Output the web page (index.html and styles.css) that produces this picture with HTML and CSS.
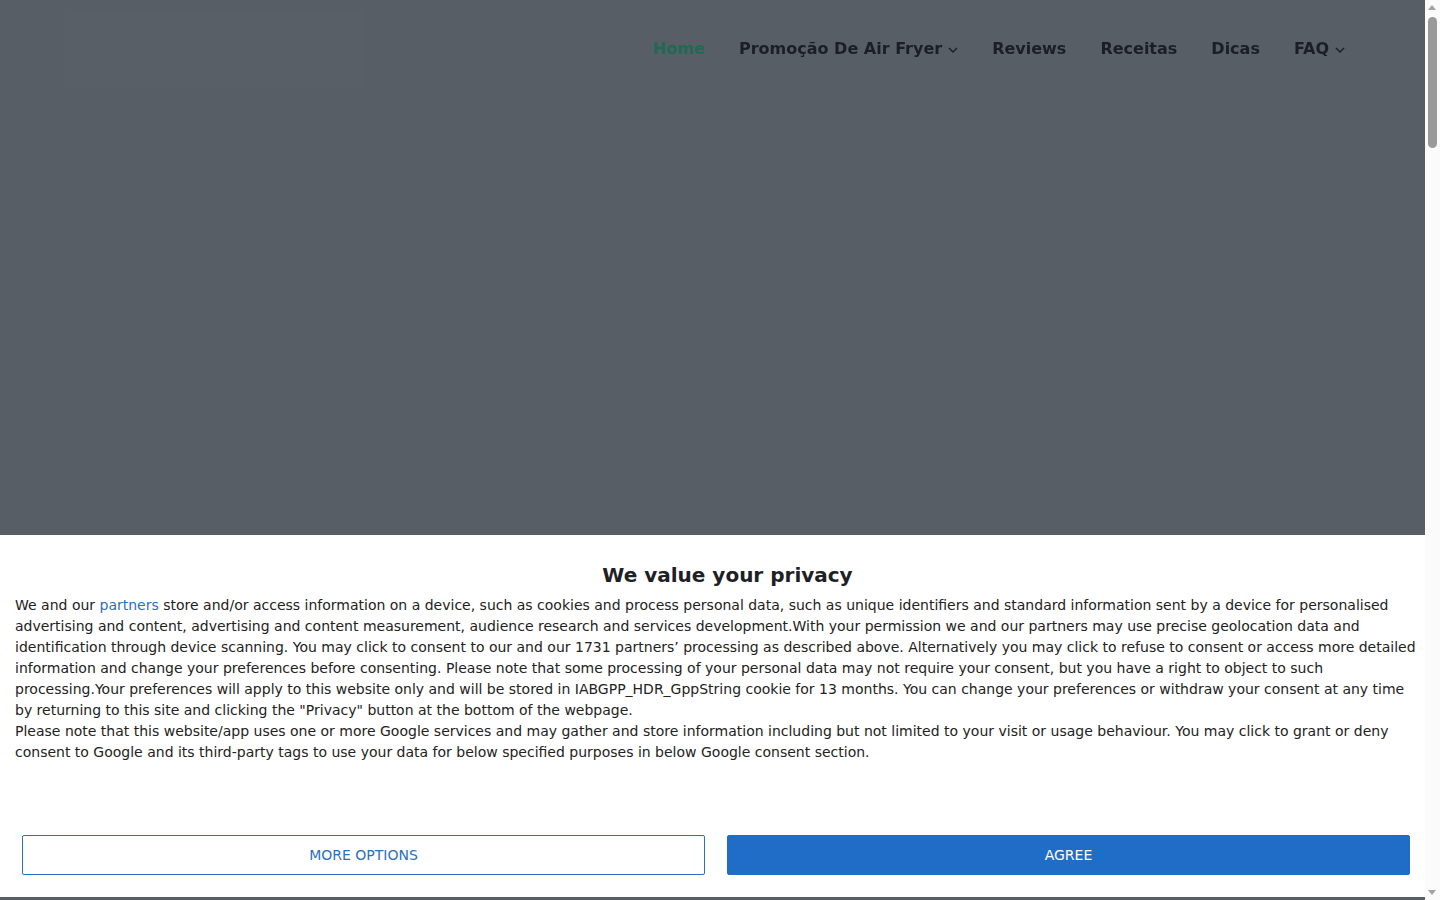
FILE: index.html
```html
<!DOCTYPE html>
<html lang="pt-BR">
  <head>
    <meta charset="UTF-8" />
    <meta name="viewport" content="width=device-width, initial-scale=1.0" />
    <title>Air Fryer - Home</title>
    <link rel="stylesheet" href="styles.css">
  </head>

  <body>
    <header class="site-header">
      <div class="container">
        <a class="logo" href="#"></a>
        <nav>
          <ul>
            <li><a class="active" href="#">Home</a></li>
            <li>
              <a href="#">Promoção De Air Fryer
                <svg class="caret" viewBox="0 0 10 6" width="10" height="6"><path d="M1 1l4 4 4-4" /></svg>
              </a>
            </li>
            <li><a href="#">Reviews</a></li>
            <li><a href="#">Receitas</a></li>
            <li><a href="#">Dicas</a></li>
            <li>
              <a href="#">FAQ
                <svg class="caret" viewBox="0 0 10 6" width="10" height="6"><path d="M1 1l4 4 4-4" /></svg>
              </a>
            </li>
          </ul>
        </nav>
      </div>
    </header>

    <main class="page">
      <div class="content"></div>
    </main>

    <div class="backdrop"></div>

    <div class="consent">
      <h2>We value your privacy</h2>
      <p>
        We and our <a href="#">partners</a> store and/or access information on a device, such as cookies and process personal data, such as unique identifiers and standard information sent by a device for personalised advertising and content, advertising and content measurement, audience research and services development.With your permission we and our partners may use precise geolocation data and identification through device scanning. You may click to consent to our and our 1731 partners’ processing as described above. Alternatively you may click to refuse to consent or access more detailed information and change your preferences before consenting. Please note that some processing of your personal data may not require your consent, but you have a right to object to such processing.Your preferences will apply to this website only and will be stored in IABGPP_HDR_GppString cookie for 13 months. You can change your preferences or withdraw your consent at any time by returning to this site and clicking the "Privacy" button at the bottom of the webpage.<br>
        Please note that this website/app uses one or more Google services and may gather and store information including but not limited to your visit or usage behaviour. You may click to grant or deny consent to Google and its third-party tags to use your data for below specified purposes in below Google consent section.
      </p>
      <div class="consent-buttons">
        <button class="btn-outline">MORE OPTIONS</button>
        <button class="btn-primary">AGREE</button>
      </div>
    </div>

    <!-- page scrollbar -->
    <div class="scrollbar">
      <span class="arrow-up"></span>
      <span class="thumb"></span>
      <span class="arrow-down"></span>
    </div>
  </body>
</html>
```

FILE: styles.css
```css
html,
body {
  margin: 0;
  padding: 0;
}

body {
  font-family: "DejaVu Sans", sans-serif;
  background-color: #fafafa;
  color: #1f1f1f;
  margin-right: 15px;
}

/* header sits above the dimmed backdrop, colours already toned down */
.site-header {
  position: relative;
  z-index: 20;
  height: 96px;
}

.site-header .container {
  display: flex;
  justify-content: space-between;
  align-items: flex-start;
  margin: 0 auto;
  padding: 10px 63px 0 65px;
}

.logo {
  display: block;
  width: 300px;
  height: 78px;
  background-color: rgba(255, 255, 255, 0.012);
}

.site-header nav ul {
  list-style: none;
  margin: 0;
  padding: 0;
  display: flex;
}

.site-header nav ul li a {
  display: flex;
  align-items: center;
  gap: 6px;
  padding: 29px 17px 27px;
  font-size: 16px;
  font-weight: bold;
  color: #1b1f25;
  text-decoration: none;
}

.site-header nav ul li a.active {
  color: #1e6a55;
}

.caret {
  margin-top: 2px;
  fill: none;
  stroke: #1b1f25;
  stroke-width: 1.4;
}

.page {
  height: 6000px;
}

.backdrop {
  position: fixed;
  top: 0;
  left: 0;
  right: 15px;
  bottom: 0;
  z-index: 10;
  background-color: rgb(88, 94, 102);
}

.consent {
  position: fixed;
  left: 0;
  right: 15px;
  bottom: 3px;
  z-index: 30;
  background-color: #fff;
  padding: 28px 0 22px;
}

.consent h2 {
  margin: 0;
  padding-left: 30px;
  text-align: center;
  font-size: 20px;
  line-height: 24px;
  color: #1d2125;
}

.consent p {
  margin: 8px 0 0;
  padding: 0 4px 0 15px;
  font-size: 14px;
  line-height: 21px;
  color: #222;
}

.consent p a {
  color: #2a6fc0;
  text-decoration: none;
}

.consent-buttons {
  display: flex;
  gap: 22px;
  margin-top: 72px;
  padding: 0 15px 0 22px;
}

.consent-buttons button {
  flex: 1;
  height: 40px;
  font-family: "DejaVu Sans", sans-serif;
  font-size: 14px;
  border-radius: 2px;
  cursor: pointer;
}

.btn-outline {
  background-color: #fff;
  color: #2a6fc0;
  border: 1px solid #2a6fc0;
}

.btn-primary {
  background-color: #1f6dc6;
  color: #fff;
  border: 1px solid #1f6dc6;
}

.scrollbar {
  position: fixed;
  top: 0;
  right: 0;
  width: 15px;
  height: 100%;
  z-index: 40;
  background-color: #fbfbfb;
}

.thumb {
  position: absolute;
  top: 17px;
  left: 3px;
  width: 9px;
  height: 131px;
  border-radius: 5px;
  background-color: #9a9a9a;
}

.arrow-up,
.arrow-down {
  position: absolute;
  left: 3px;
  width: 0;
  height: 0;
  border-left: 4px solid transparent;
  border-right: 4px solid transparent;
}

.arrow-up {
  top: 5px;
  border-bottom: 5px solid #a3a3a3;
}

.arrow-down {
  bottom: 5px;
  border-top: 5px solid #a3a3a3;
}
```
